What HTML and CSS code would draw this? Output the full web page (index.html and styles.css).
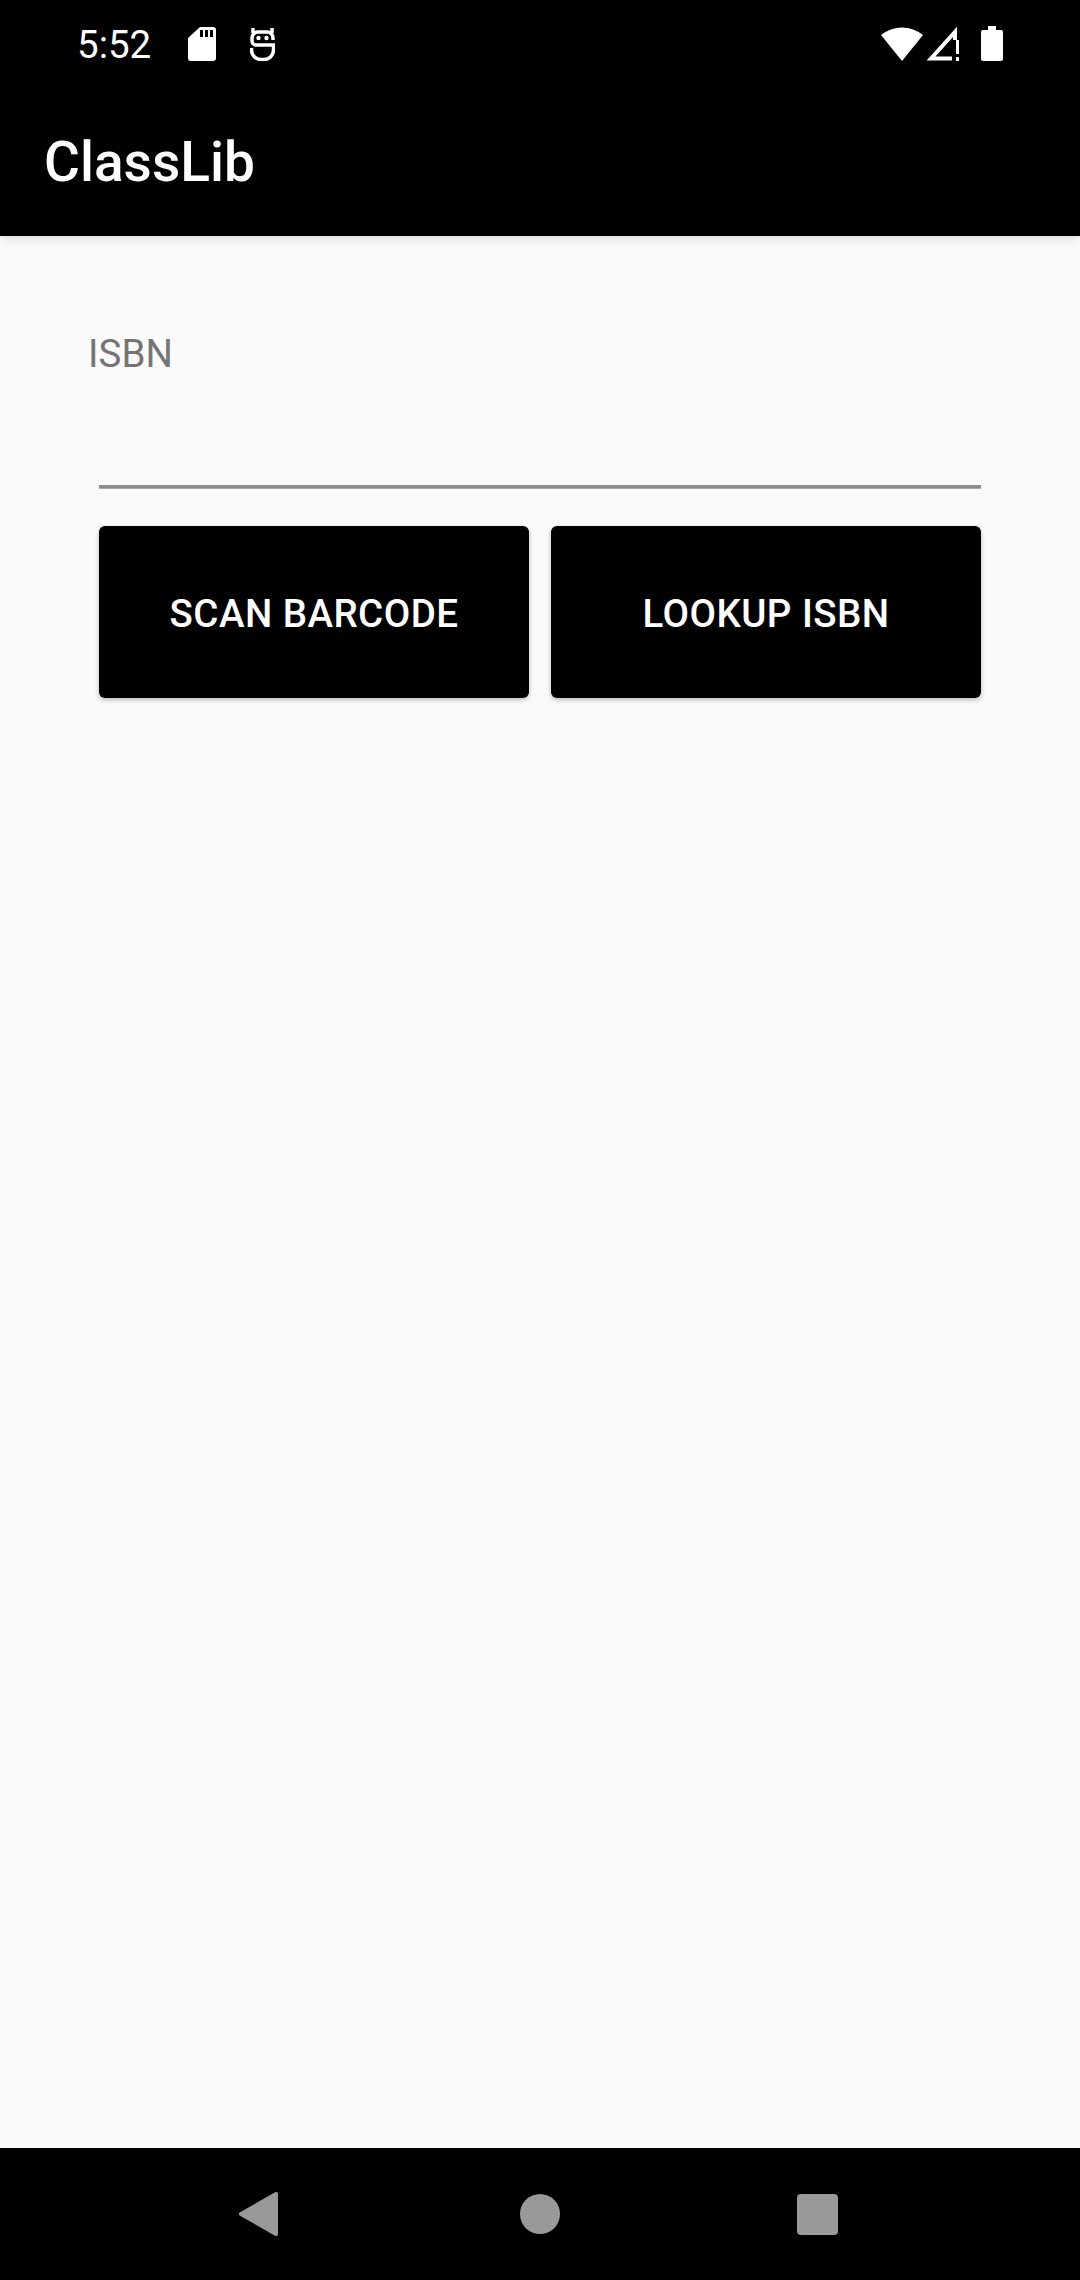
FILE: index.html
```html
<!DOCTYPE html>
<html lang="en">
<head>
<meta charset="utf-8">
<title>ClassLib</title>
<link rel="stylesheet" href="styles.css">
</head>
<body>
<div class="screen">
  <header class="appbar">
    <div class="status">
      <span class="time">5:52</span>
      <svg class="ic-sd" viewBox="0 0 28 34" width="28" height="34"><path fill="#fff" fill-rule="evenodd" d="M12 0H25a3 3 0 0 1 3 3V31a3 3 0 0 1-3 3H3a3 3 0 0 1-3-3V11ZM12 3v7h3V3ZM17 3v7h3V3ZM22 3v7h3V3Z"/></svg>
      <svg class="ic-s" viewBox="0 0 25 33" width="25" height="33"><g fill="none" stroke="#fff" stroke-width="3.500"><path d="M3 0V5M22 0V5"/><path d="M23 12V10a6 6 0 0 0-6-6H8a6 6 0 0 0-6 6v3a4 4 0 0 0 4 4H23.500v5a9.500 9.500 0 0 1-9.500 9.500H11A9.500 9.500 0 0 1 1.500 22V20"/></g><circle cx="8.500" cy="10" r="2.200" fill="#fff"/><circle cx="16.500" cy="10" r="2.200" fill="#fff"/></svg>
      <span class="spacer"></span>
      <svg class="ic-wifi" viewBox="0 0 42 36" width="42" height="36"><path fill="#fff" d="M21 35 0 9a33 33 0 0 1 42 0Z"/></svg>
      <svg class="ic-cell" viewBox="0 0 36 36" width="36" height="36"><path fill="none" stroke="#fff" stroke-width="4" d="M6 32.500 30 6V32.500Z"/><path fill="#000" d="M27 14h9v22h-9z"/><path fill="#fff" d="M31 14h3v14h-3zM31 31h3v4h-3z"/></svg>
      <svg class="ic-batt" viewBox="0 0 22 36" width="22" height="36"><path fill="#fff" d="M7 0h8v4h5a2 2 0 0 1 2 2V33a2 2 0 0 1-2 2H2a2 2 0 0 1-2-2V6a2 2 0 0 1 2-2h5Z"/></svg>
    </div>
    <div class="toolbar">ClassLib</div>
  </header>
  <main class="content">
    <div class="hint">ISBN</div>
    <div class="rule"></div>
    <div class="actions">
      <button class="btn" type="button">SCAN BARCODE</button>
      <button class="btn" type="button">LOOKUP ISBN</button>
    </div>
  </main>
  <footer class="nav">
    <svg viewBox="0 0 40 46" width="40" height="46"><path fill="#999" stroke="#999" stroke-width="4" stroke-linejoin="round" d="M37 3V43L2 23Z"/></svg>
    <svg viewBox="0 0 40 40" width="40" height="40"><circle cx="20" cy="20" r="20" fill="#999"/></svg>
    <svg viewBox="0 0 41 41" width="41" height="41"><rect width="41" height="41" rx="4" fill="#999"/></svg>
  </footer>
</div>
</body>
</html>
```
FILE: styles.css
```css
* { box-sizing: border-box; }
html, body { margin: 0; padding: 0; }
body { font-family: Roboto, sans-serif; background: #fafafa; }
.screen { width: 1080px; height: 2280px; display: flex; flex-direction: column; }
.appbar { height: 236px; background: #000; color: #fff; box-shadow: 0 3px 10px rgba(0,0,0,.12); position: relative; }
.status { height: 88px; display: flex; align-items: center; padding: 0 77px 0 77px; }
.time { font-size: 38.5px; width: 110px; }
.ic-sd { margin-left: 1px; margin-right: 34px; }
.spacer { flex: 1; }
.ic-wifi { margin-right: 2px; }
.ic-cell { margin-right: 20px; }
.toolbar { height: 148px; padding: 0 0 0 44px; display: flex; align-items: center; font-size: 55px; font-weight: 500; }
.content { flex: 1; padding: 95px 99px 0; }
.hint { font-size: 38.5px; line-height: 46px; color: #757575; margin-left: -11px; letter-spacing: .1px; }
.rule { height: 4px; background: #8c8c8c; border-bottom: 1px solid #aaa; margin-top: 108px; }
.actions { display: flex; gap: 22px; margin-top: 37px; }
.btn { flex: 1; height: 172px; padding: 2px 0 0; background: #000; color: #fff; border: 0; border-radius: 6px; font-family: inherit; font-size: 38.5px; font-weight: 500; letter-spacing: .45px; box-shadow: 0 2px 5px rgba(0,0,0,.25); }
.nav { height: 132px; background: #000; display: flex; align-items: center; justify-content: center; position: relative; padding-right: 3px; }
.nav svg:nth-child(1) { margin-right: 241px; }
.nav svg:nth-child(2) { margin-right: 237px; }
```
